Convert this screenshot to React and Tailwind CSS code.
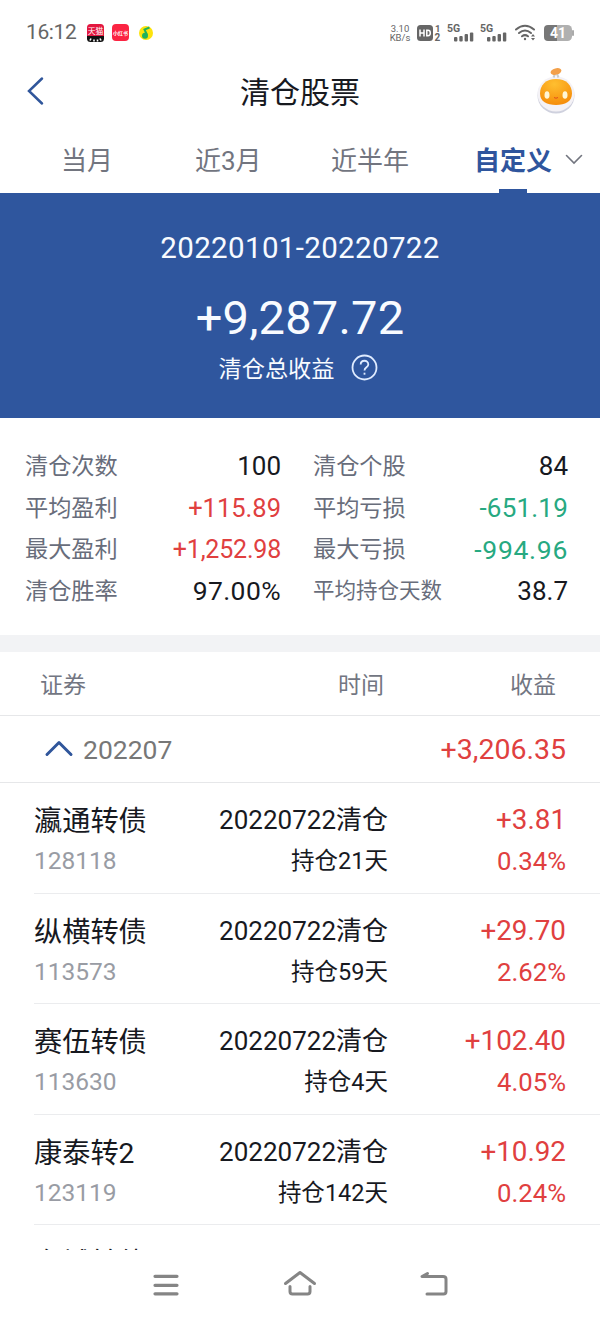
const stats = [
  { label: '清仓次数', value: '100', tone: 'text-[#17191f]', size: 'text-[26px]' },
  { label: '清仓个股', value: '84', tone: 'text-[#17191f]', size: 'text-[26px]' },
  { label: '平均盈利', value: '+115.89', tone: 'text-[#e0403f]', size: 'text-[25.5px]' },
  { label: '平均亏损', value: '-651.19', tone: 'text-[#27a981]', size: 'text-[26px] tracking-[0.2px]' },
  { label: '最大盈利', value: '+1,252.98', tone: 'text-[#e0403f]', size: 'text-[25px] tracking-[-0.2px]' },
  { label: '最大亏损', value: '-994.96', tone: 'text-[#27a981]', size: 'text-[26.5px] tracking-[0.7px]' },
  { label: '清仓胜率', value: '97.00%', tone: 'text-[#17191f]', size: 'text-[26.5px] tracking-[0.4px]' },
  { label: '平均持仓天数', value: '38.7', tone: 'text-[#17191f]', size: 'text-[26px]', small: true },
]

const trades = [
  { name: '瀛通转债', code: '128118', days: 21, profit: '+3.81', pct: '0.34%' },
  { name: '纵横转债', code: '113573', days: 59, profit: '+29.70', pct: '2.62%' },
  { name: '赛伍转债', code: '113630', days: 4, profit: '+102.40', pct: '4.05%' },
  { name: '康泰转2', code: '123119', days: 142, profit: '+10.92', pct: '0.24%' },
]

function Signal() {
  return (
    <svg className="overflow-visible" width="28" height="20" viewBox="0 -1 28 20" fill="#666">
      <text x="0" y="8" fontSize="10.5" fontWeight="700">5G</text>
      <rect x="7" y="13" width="3.4" height="4.5" rx="1" />
      <rect x="12.3" y="12" width="3.4" height="5.5" rx="1" />
      <rect x="17.6" y="10" width="3.4" height="7.5" rx="1" />
      <rect x="22.9" y="8.5" width="3.4" height="9" rx="1" />
    </svg>
  )
}

function StatusBar() {
  return (
    <div className="h-16 shrink-0 flex items-center pt-px px-[26px] text-[#666]">
      <span className="text-[21px] tracking-[-0.4px] w-[61px] pt-px">16:12</span>
      <div className="flex items-center gap-2">
        <svg width="17" height="18" viewBox="0 0 17 18">
          <path d="M0 12 V3.5 Q0 0 3.5 0 H13.5 Q17 0 17 3.5 V12 Z" fill="#e3173f" />
          <path d="M0 12 H17 V14.500 Q17 18 13.500 18 H3.500 Q0 18 0 14.500 Z" fill="#111" />
          <text x="8.500" y="10" fontSize="7.800" textAnchor="middle" fill="#fff">天猫</text>
          <path d="M3 16.500 L4 14.500 M7 17.500 V15.500 M10.500 17.500 V15.500 M14 16.500 L13 14.500" stroke="#fff" strokeWidth="1.600" />
        </svg>
        <svg width="17" height="17" viewBox="0 0 17 17">
          <rect width="17" height="17" rx="4" fill="#fb2442" />
          <text x="8.500" y="10.500" fontSize="5" textAnchor="middle" fill="#fff" fontWeight="700">小红书</text>
        </svg>
        <svg width="18" height="16" viewBox="0 0 18 16">
          <circle cx="9" cy="8" r="7" fill="#fde30c" />
          <path d="M12.500 2.500 L7.500 4.500 L10 10" stroke="#1fb25c" strokeWidth="2" fill="none" />
          <circle cx="8" cy="10.800" r="3" fill="#1fb25c" />
        </svg>
      </div>
      <div className="ml-auto flex items-center">
        <div className="text-[9.500px] leading-[9px] text-center w-[22px]">
          3.10
          <br />
          KB/s
        </div>
        <svg className="ml-[6px] overflow-visible" width="24" height="22" viewBox="0 -2 24 22" fill="#666">
          <rect x="0" y="1" width="16" height="16" rx="3.500" />
          <path d="M3 5.500 V12.500 M7 5.500 V12.500 M3 9 H7 M9.800 6.300 H11 Q13.300 6.300 13.300 9 Q13.300 11.700 11 11.700 H9.800 Z" stroke="#fff" strokeWidth="1.500" fill="none" />
          <text x="18" y="7.500" fontSize="9.500" fontWeight="700">1</text>
          <text x="17.500" y="17" fontSize="10" fontWeight="700">2</text>
        </svg>
        <div className="ml-[6px] flex gap-[5px]">
          <Signal />
          <Signal />
        </div>
        <svg className="ml-[7px]" width="21" height="18" viewBox="0 0 21 18" fill="none" stroke="#666" strokeWidth="2" strokeLinecap="round">
          <path d="M1 5.500 Q10 -2 19 5.500" />
          <path d="M4 9 Q10 4 16 9" />
          <path d="M7 12.300 Q10 10 13 12.300" />
          <circle cx="10" cy="15" r="1.200" fill="#666" stroke="none" />
          <path d="M16 12.500 L18 10 L20 12.500 Z M16 14 L18 16.500 L20 14 Z" fill="#666" stroke="none" />
        </svg>
        <svg className="ml-[8px]" width="30" height="16" viewBox="0 0 30 16">
          <rect x="8" width="20" height="16" rx="4.500" fill="#b0b0b0" />
          <path d="M4 0 H13 V16 H4 Q0 16 0 12 V4 Q0 0 4 0 Z" fill="#777" />
          <rect x="28" y="5" width="2" height="6" rx="1" fill="#aaa" />
          <text x="14" y="13" fontSize="14" fontWeight="700" textAnchor="middle" fill="#fff">41</text>
        </svg>
      </div>
    </div>
  )
}

function Mascot() {
  return (
    <svg width="44" height="50" viewBox="0 0 44 50">
      <defs>
        <radialGradient id="face" cx="45%" cy="20%" r="85%">
          <stop offset="0" stopColor="#ffbf30" />
          <stop offset="1" stopColor="#f58a08" />
        </radialGradient>
      </defs>
      <ellipse cx="22" cy="28.500" rx="18.500" ry="18" fill="#cfd1de" />
      <ellipse cx="22" cy="27" rx="18.500" ry="17.500" fill="#f4f2f6" />
      <path d="M19.500 10.500 L21 7 M24.500 10.500 L23 7" stroke="#ccc" strokeWidth="2" />
      <ellipse cx="22" cy="4.500" rx="5.500" ry="3.200" fill="#f3a04a" transform="rotate(-15 22 4.500)" />
      <path d="M22 12 C32 12 38 18 38 26.500 C38 34.500 31 38 22 38 C13 38 6 34.500 6 26.500 C6 18 12 12 22 12 Z" fill="url(#face)" />
      <ellipse cx="13" cy="28" rx="2.500" ry="3.800" fill="#fff6d5" />
      <ellipse cx="31" cy="28" rx="2.500" ry="3.800" fill="#fff6d5" />
      <path d="M20 30.500 Q22 32 24 30.500" stroke="#e0501c" fill="none" />
    </svg>
  )
}

export default function App() {
  return (
    <div className="w-[600px] h-[1320px] bg-white overflow-hidden flex flex-col font-['Roboto','Noto_Sans_CJK_SC',sans-serif]">
      <StatusBar />

      <header className="h-[56px] shrink-0 flex items-center justify-between pl-[26px] pr-[22px]">
        <svg className="-mt-[2px]" width="40" height="30" viewBox="0 0 40 30" fill="none" stroke="#30569b" strokeWidth="2.500" strokeLinecap="round">
          <path d="M16 2.500 L3 15 L16 27.500" />
        </svg>
        <h1 className="text-[30px] leading-none pt-px text-[#17191f]">清仓股票</h1>
        <Mascot />
      </header>

      <nav className="h-[73px] shrink-0 flex items-stretch text-[26px] leading-[82px] text-[#72757f] pl-[61px] pr-[17px]">
        <span className="w-[134px]">当月</span>
        <span className="w-[136px]">近3月</span>
        <span className="w-[143px]">近半年</span>
        <span className="relative text-[#2f559d] font-bold">
          自定义
          <span className="absolute left-[25px] bottom-0 w-[28px] h-[4px] bg-[#2f569e]" />
        </span>
        <svg className="ml-auto mt-[34px]" width="18" height="12" viewBox="0 0 18 12" fill="none" stroke="#72757f" strokeWidth="1.600" strokeLinecap="round">
          <path d="M1.500 1.500 L9 9 L16.500 1.500" />
        </svg>
      </nav>

      <section className="h-[225px] shrink-0 bg-[#2f569e] text-[#f8fbff] flex flex-col items-center">
        <div className="mt-[38px] text-[29.500px] tracking-[0.350px] leading-[34px]">20220101-20220722</div>
        <div className="mt-[26px] text-[47px] tracking-[0.200px] leading-[54px]">+9,287.72</div>
        <div className="mt-[6px] mr-[3px] flex items-center text-[23.200px] leading-[30px]">
          <span className="pt-[3px]">清仓总收益</span>
          <svg className="ml-[17px]" width="27" height="27" viewBox="0 0 27 27" fill="none" stroke="#dfebff" strokeWidth="1.800">
            <circle cx="13.500" cy="13.500" r="12" />
            <path d="M9.700 10.500 C9.700 5.500 17.300 5.500 17.300 10.500 C17.300 13.500 13.500 13 13.500 16.500" />
            <path d="M13.500 18.700 V20.700" />
          </svg>
        </div>
      </section>

      <section className="h-[217px] shrink-0 pt-[28px] pl-[25px] pr-[31px] grid grid-cols-[256px_255px] gap-x-[32px] auto-rows-[41.500px]">
        {stats.map((s) => (
          <div key={s.label} className="flex items-center justify-between">
            <span className={s.small ? 'text-[21.500px] text-[#686d7b]' : 'text-[23.200px] text-[#686d7b]'}>{s.label}</span>
            <span className={`${s.size} ${s.tone}`}>{s.value}</span>
          </div>
        ))}
      </section>

      <div className="h-[17px] shrink-0 bg-[#f2f3f5]" />

      <div className="h-[64px] shrink-0 flex items-center text-[23px] text-[#727682] pt-[5px] pl-[40px] pr-[44px] border-b border-[#e6e7e9]">
        <span className="w-[298px]">证券</span>
        <span>时间</span>
        <span className="ml-auto">收益</span>
      </div>

      <div className="h-[67px] shrink-0 flex items-center pt-[3px] pl-[44px] pr-[34px] border-b border-[#e6e7e9]">
        <svg className="-mt-[3px]" width="30" height="20" viewBox="0 0 30 20" fill="none" stroke="#30569b" strokeWidth="3" strokeLinecap="round" strokeLinejoin="round">
          <path d="M3 15.500 L15 3.500 L27 15.500" />
        </svg>
        <span className="ml-[9px] -mt-px text-[26.500px] text-[#777]">202207</span>
        <span className="ml-auto text-[28.500px] text-[#e0403f]">+3,206.35</span>
      </div>

      <div className="h-[467px] shrink-0 overflow-hidden pl-[34px]">
        {trades.map((t) => (
          <div key={t.code} className="h-[110.600px] pt-[16px] pr-[34px] border-b border-[#ebecee] flex">
            <div className="w-[155px]">
              <div className="text-[28.200px] leading-[42px] pt-[2px] -mb-[2px] text-[#17191f]">{t.name}</div>
              <div className="text-[24.500px] leading-[40px] text-[#999ca4]">{t.code}</div>
            </div>
            <div className="w-[199px] text-right text-[#17191f]">
              <div className="text-[26px] leading-[42px]">20220722清仓</div>
              <div className="text-[23.500px] leading-[40px]">持仓{t.days}天</div>
            </div>
            <div className="ml-auto text-right text-[#e0403f]">
              <div className="text-[27.800px] leading-[42px]">{t.profit}</div>
              <div className="text-[25.700px] leading-[40px]">{t.pct}</div>
            </div>
          </div>
        ))}
        <div className="pt-[17.500px] text-[28.200px] leading-[42px] text-[#17191f]">东城转债</div>
      </div>

      <div className="flex-1 flex items-center justify-center gap-[101px]">
        <svg width="32" height="32" viewBox="0 0 32 32" fill="none" stroke="#858585" strokeWidth="3.200" strokeLinecap="round">
          <path d="M5 7.300 H27 M5 16.300 H27 M5 24.800 H27" />
        </svg>
        <svg width="34" height="32" viewBox="0 0 34 32" fill="none" stroke="#858585" strokeWidth="3" strokeLinecap="round" strokeLinejoin="round">
          <path d="M2.500 14.500 L17 3.500 L31.500 14.500" />
          <path d="M7 17.500 V22.500 Q7 25 9.500 25 H24.500 Q27 25 27 22.500 V17.500" />
        </svg>
        <svg width="32" height="32" viewBox="0 0 32 32" fill="none" stroke="#858585" strokeWidth="3" strokeLinecap="round" strokeLinejoin="round">
          <path d="M9.500 4.500 L4 7.500 H25 Q28 7.500 28 10 V22.500 Q28 25 25.500 25 H9" />
        </svg>
      </div>
    </div>
  )
}
